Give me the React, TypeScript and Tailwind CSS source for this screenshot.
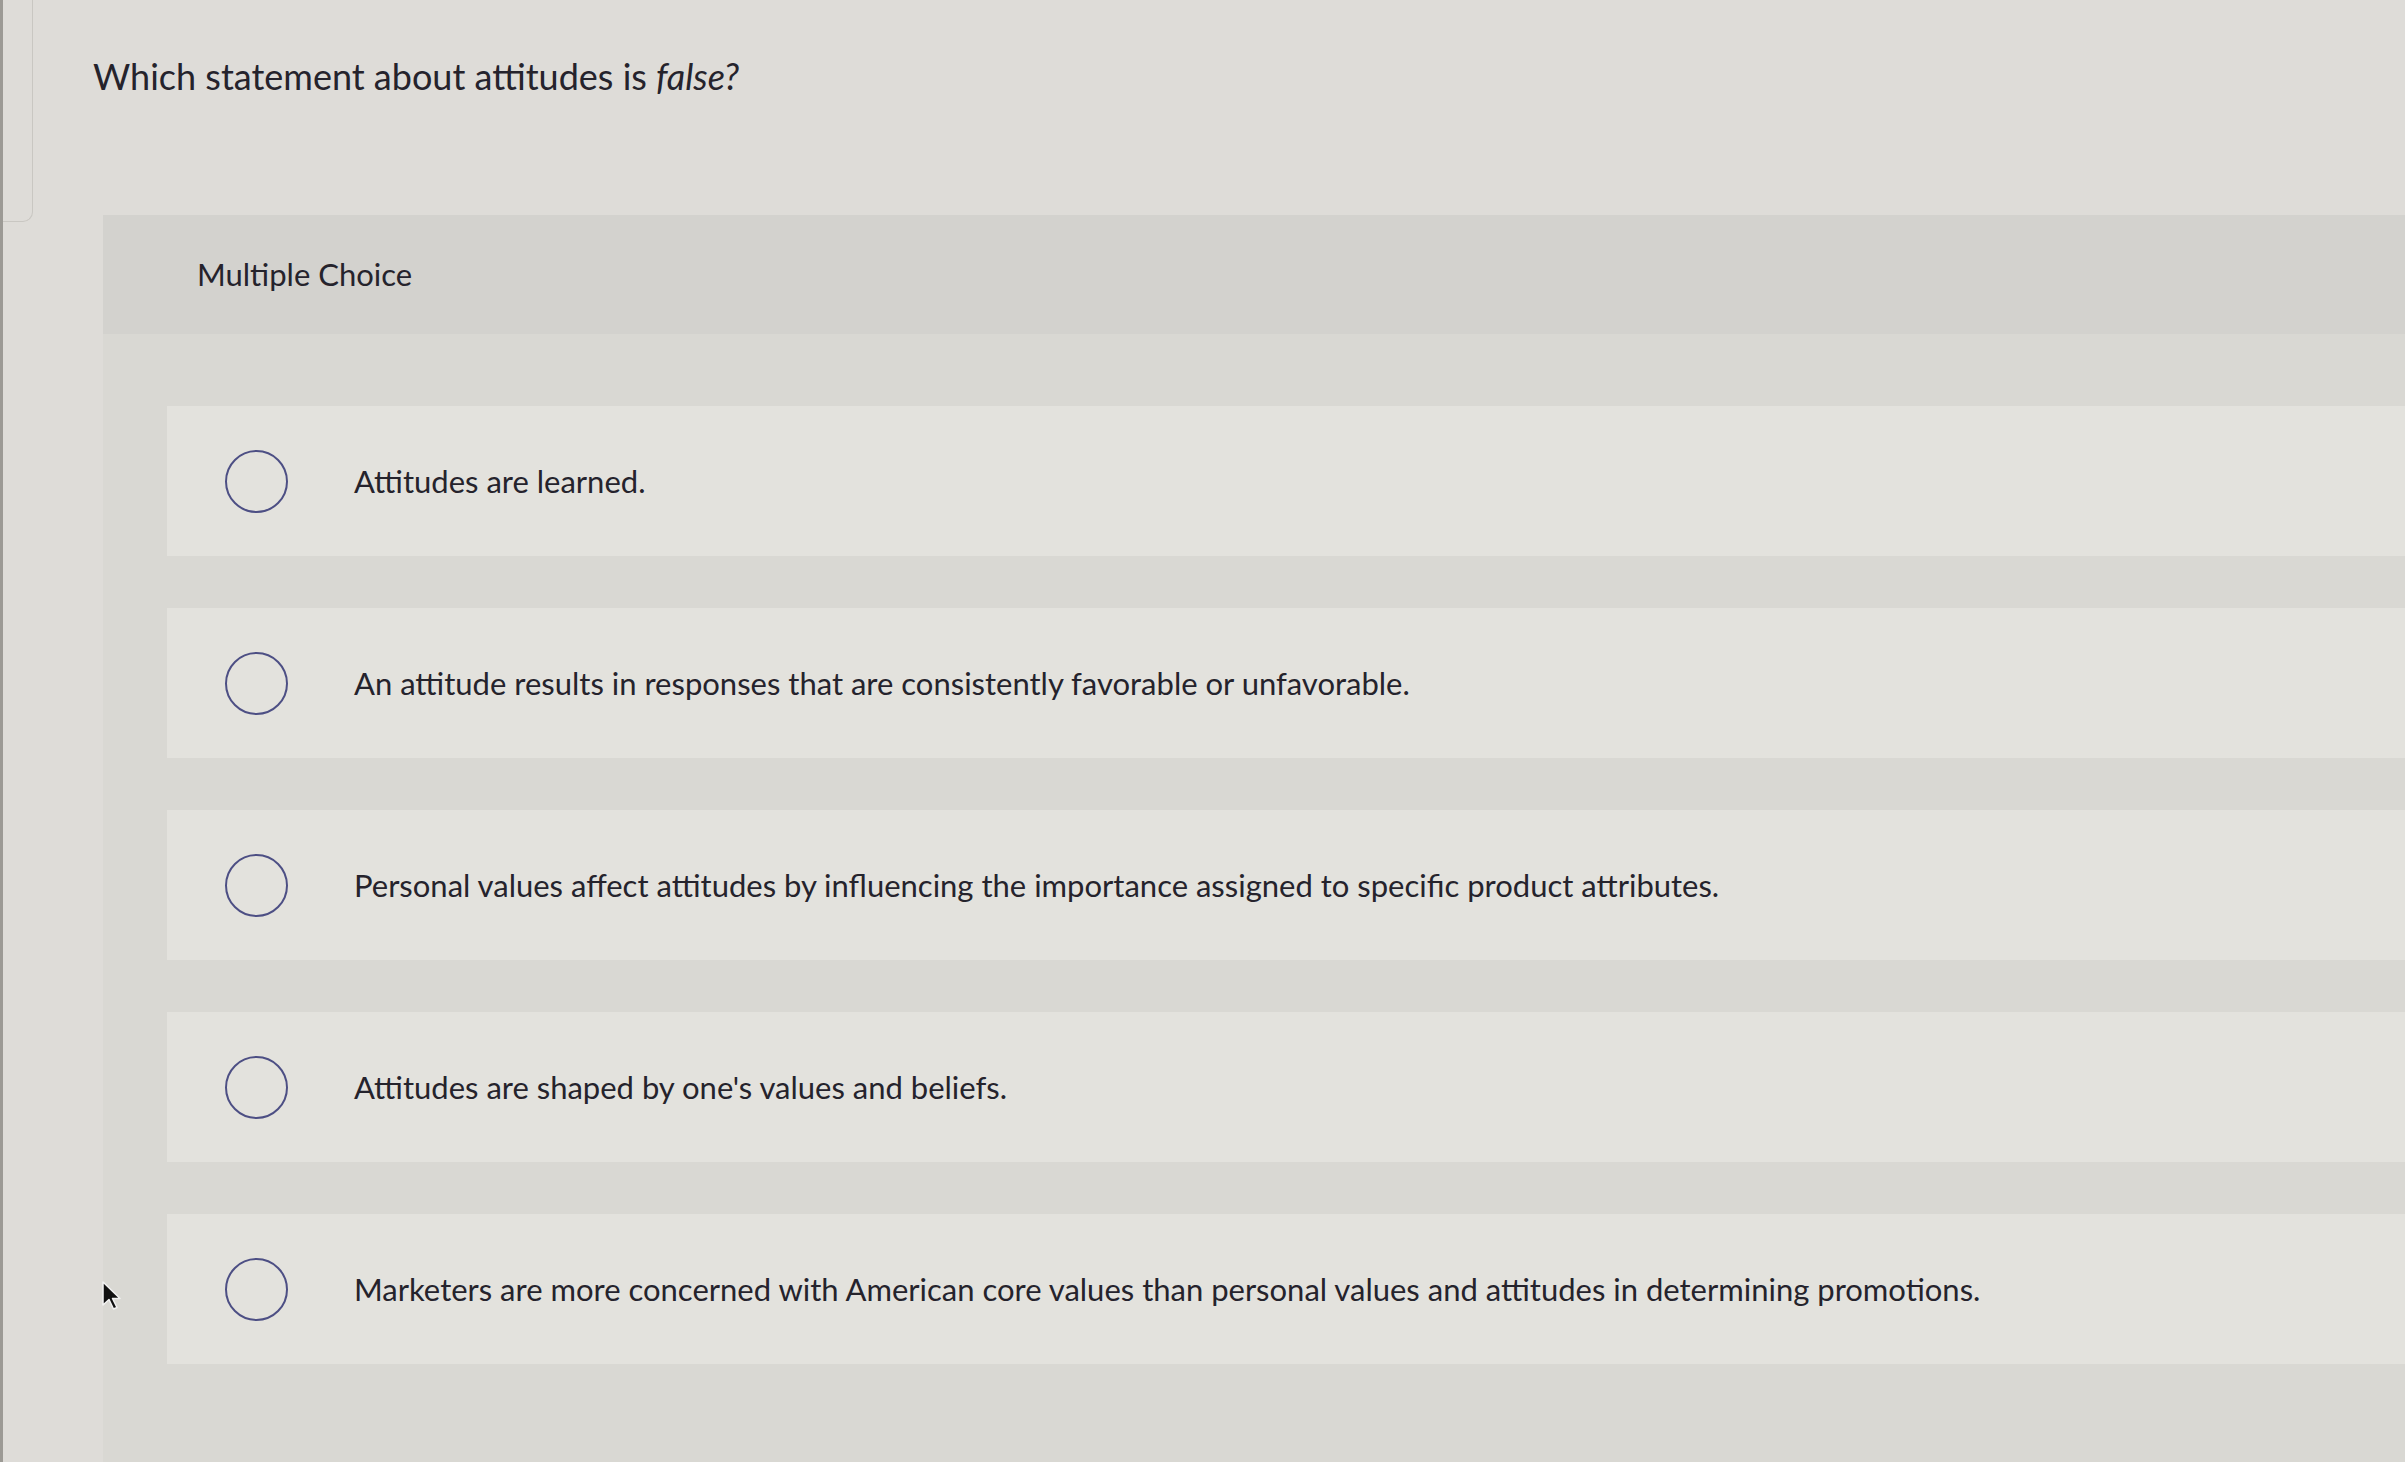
const options = [
  'Attitudes are learned.',
  'An attitude results in responses that are consistently favorable or unfavorable.',
  'Personal values affect attitudes by influencing the importance assigned to specific product attributes.',
  "Attitudes are shaped by one's values and beliefs.",
  'Marketers are more concerned with American core values than personal values and attitudes in determining promotions.',
];

function Radio() {
  return (
    <span className="block h-[63px] w-[63px] shrink-0 rounded-full border-[2.5px] border-[#4d4f84]" />
  );
}

function Cursor() {
  return (
    <svg width="22" height="32" viewBox="0 0 22 32" className="absolute left-[98px] top-[1280px]">
      <path
        d="M2 2 L2 25 L8 19.5 L12.5 29 L16 27.5 L11.5 18.5 L19 18.5 Z"
        fill="#111"
        stroke="#f2f2f2"
        strokeWidth="1.5"
        strokeLinejoin="round"
      />
    </svg>
  );
}

export default function App() {
  return (
    <div
      className="relative h-[1462px] w-[2405px] overflow-hidden border-l-[3px] border-[#9c9a95] bg-[#dedcd8] text-[#25232c]"
      style={{ fontFamily: 'Lato, "Noto Sans", sans-serif' }}
    >
      <div className="absolute left-0 top-0 h-[222px] w-[30px] rounded-br-[10px] border-b border-r border-[#c9c7c2]" />

      <h1 className="pl-[90px] pt-[53px] text-[36px] font-normal leading-[46px]">
        Which statement about attitudes is <em>false?</em>
      </h1>

      <section className="ml-[100px] mt-[116px] min-h-[1300px] bg-[#d9d8d3]">
        <div className="flex h-[119px] items-center bg-[#d3d2ce] pl-[94px] text-[31px]">
          Multiple Choice
        </div>

        <div className="flex flex-col gap-[52px] pl-[64px] pt-[72px]">
          {options.map((text) => (
            <label
              key={text}
              className="flex h-[150px] items-center bg-[#e3e2dd] pl-[58px]"
            >
              <Radio />
              <span className="ml-[66px] text-[31px] leading-[38px]">{text}</span>
            </label>
          ))}
        </div>
      </section>

      <Cursor />
    </div>
  );
}
